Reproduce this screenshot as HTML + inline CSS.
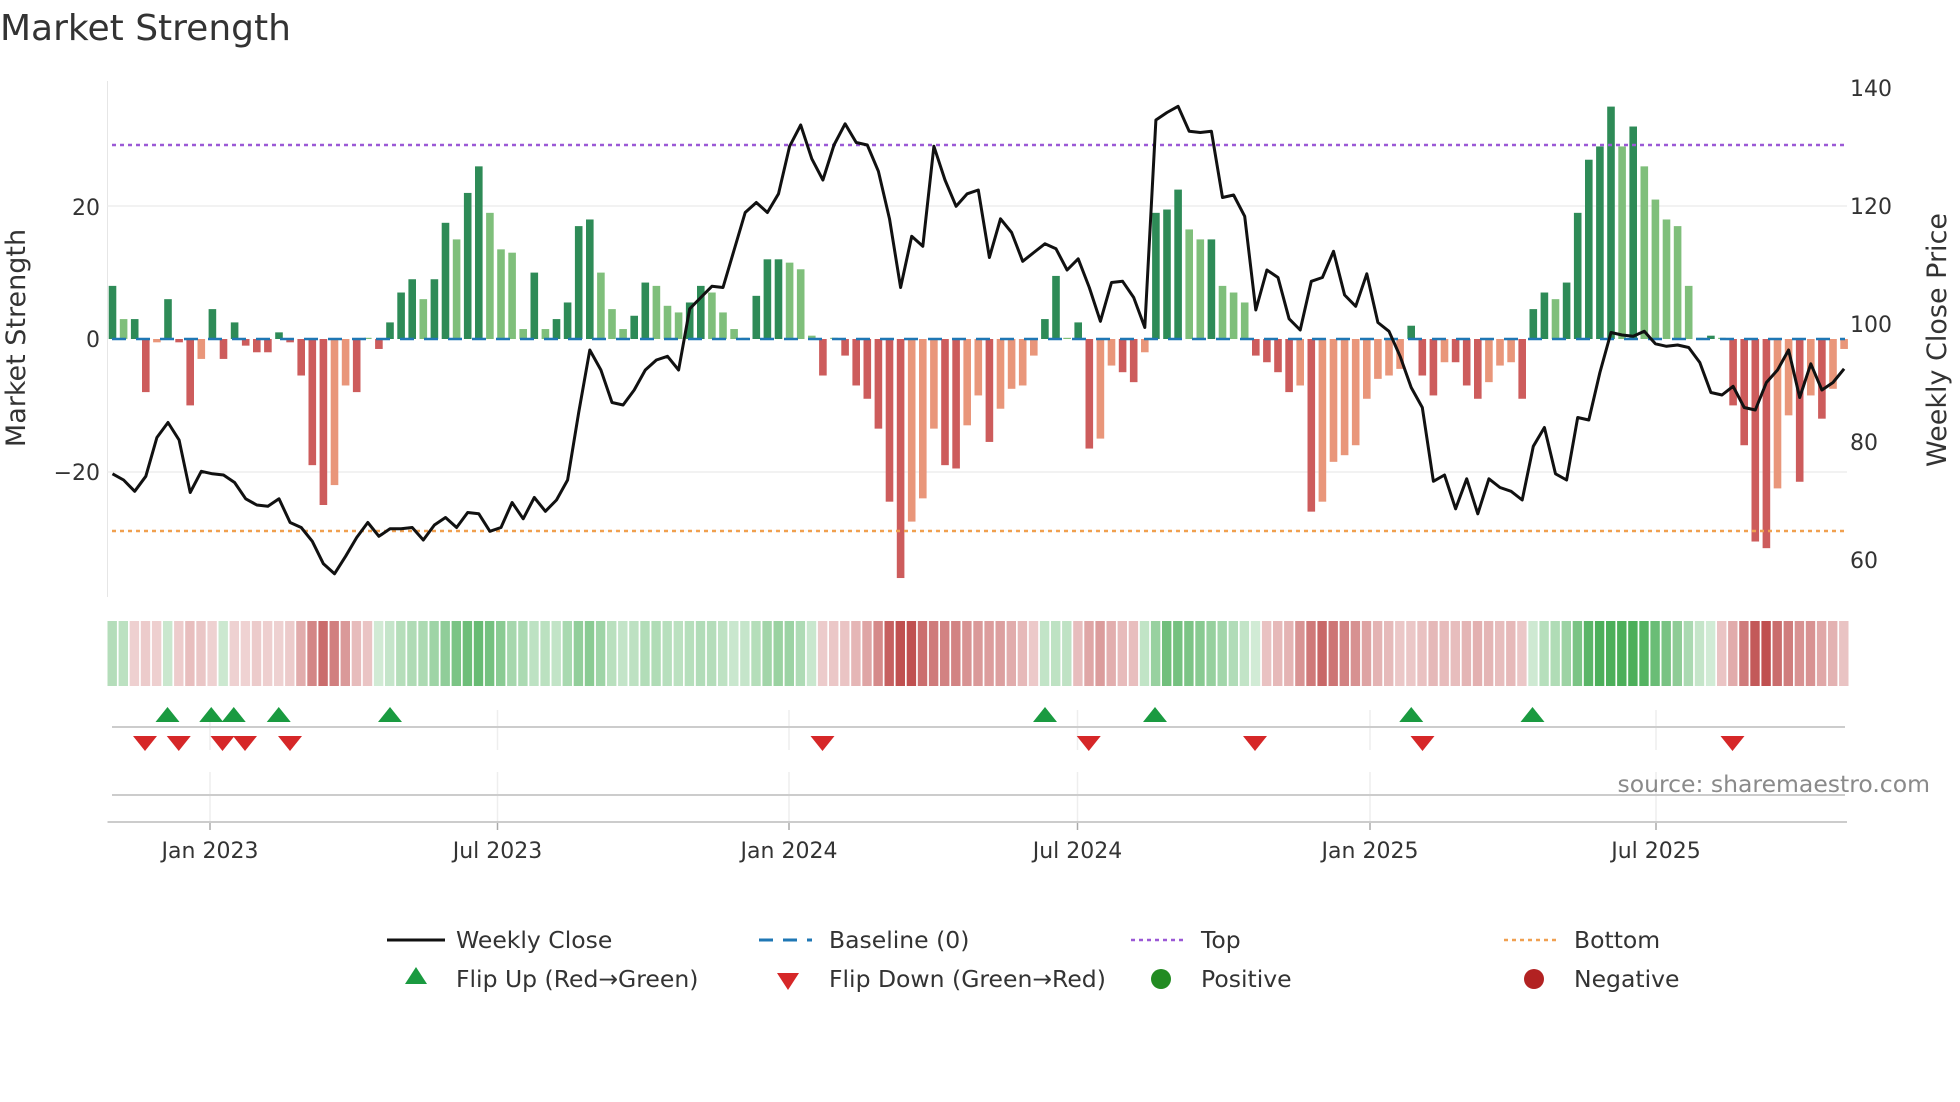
<!DOCTYPE html>
<html><head><meta charset="utf-8"><style>
html,body{margin:0;padding:0;background:#fff;width:1960px;height:1102px;overflow:hidden}
svg{display:block}
text{font-family:"DejaVu Sans","Liberation Sans",sans-serif;fill:#333}
</style></head><body>
<svg id="c" width="1960" height="1102" xmlns="http://www.w3.org/2000/svg">
<text x="0" y="40" font-size="36">Market Strength</text>
<g id="g"></g>
<text x="1930" y="792" font-size="23.5" text-anchor="end" style="fill:#8a8a8a">source: sharemaestro.com</text>
<text transform="translate(25,338) rotate(-90)" font-size="27" text-anchor="middle">Market Strength</text>
<text transform="translate(1946,340) rotate(-90)" font-size="27" text-anchor="middle">Weekly Close Price</text>
<g font-size="22">
<text x="100" y="215" text-anchor="end">20</text>
<text x="100" y="347" text-anchor="end">0</text>
<text x="100" y="480" text-anchor="end">−20</text>
<text x="1850" y="96">140</text>
<text x="1850" y="214">120</text>
<text x="1850" y="332">100</text>
<text x="1850" y="450">80</text>
<text x="1850" y="568">60</text>
<text x="210" y="858" text-anchor="middle">Jan 2023</text>
<text x="497.5" y="858" text-anchor="middle">Jul 2023</text>
<text x="789" y="858" text-anchor="middle">Jan 2024</text>
<text x="1077.5" y="858" text-anchor="middle">Jul 2024</text>
<text x="1370" y="858" text-anchor="middle">Jan 2025</text>
<text x="1656" y="858" text-anchor="middle">Jul 2025</text>
</g>
<g font-size="23.5">
<line x1="387" y1="940" x2="445" y2="940" stroke="#111" stroke-width="3"/>
<text x="456" y="948">Weekly Close</text>
<line x1="759" y1="940" x2="812" y2="940" stroke="#1f77b4" stroke-width="3" stroke-dasharray="14,10"/>
<text x="829" y="948">Baseline (0)</text>
<line x1="1131" y1="940" x2="1185" y2="940" stroke="#9b59d6" stroke-width="2.5" stroke-dasharray="4,4"/>
<text x="1201" y="948">Top</text>
<line x1="1504" y1="940" x2="1559" y2="940" stroke="#f0a050" stroke-width="2.5" stroke-dasharray="4,4"/>
<text x="1574" y="948">Bottom</text>
<polygon points="416,967 427,984 405,984" fill="#1a9a40"/>
<text x="456" y="987">Flip Up (Red→Green)</text>
<polygon points="777,973 799,973 788,990" fill="#d62728"/>
<text x="829" y="987">Flip Down (Green→Red)</text>
<circle cx="1161" cy="979" r="10" fill="#228b22"/>
<text x="1201" y="987">Positive</text>
<circle cx="1534" cy="979" r="10" fill="#b22222"/>
<text x="1574" y="987">Negative</text>
</g>
</svg>
<script>
var V=[8,3,3,-8,-0.5,6,-0.5,-10,-3,4.5,-3,2.5,-1,-2,-2,1,-0.5,-5.5,-19,-25,-22,-7,-8,0,-1.5,2.5,7,9,6,9,17.5,15,22,26,19,13.5,13,1.5,10,1.5,3,5.5,17,18,10,4.5,1.5,3.5,8.5,8,5,4,5.5,8,7,4,1.5,0,6.5,12,12,11.5,10.5,0.5,-5.5,0,-2.5,-7,-9,-13.5,-24.5,-36,-27.5,-24,-13.5,-19,-19.5,-13,-8.5,-15.5,-10.5,-7.5,-7,-2.5,3,9.5,0,2.5,-16.5,-15,-4,-5,-6.5,-2,19,19.5,22.5,16.5,15,15,8,7,5.5,-2.5,-3.5,-5,-8,-7,-26,-24.5,-18.5,-17.5,-16,-9,-6,-5.5,-4.5,2,-5.5,-8.5,-3.5,-3.5,-7,-9,-6.5,-4,-3.5,-9,4.5,7,6,8.5,19,27,29,35,29,32,26,21,18,17,8,0,0.5,0,-10,-16,-30.5,-31.5,-22.5,-11.5,-21.5,-8.5,-12,-7.5,-1.5];
var P=[379,384,393,381,350,338,352,394,377,379,380,386,399,404,405,399,418,422,433,451,459,445,430,418,429,423,423,422,432,420,414,422,410,411,425,422,402,415,398,409,400,384,330,280,296,322,324,312,296,288,285,296,247,238,229,230,200,170,162,170,155,117,100,127,144,116,99,114,116,137,175,230,189,197,117,144,165,155,152,206,175,186,209,202,195,199,216,207,230,257,226,225,238,262,96,90,85,105,106,105,158,156,173,248,216,222,255,264,225,222,201,236,245,219,258,265,285,310,326,385,380,407,383,411,383,390,393,400,357,342,379,384,334,336,298,266,268,269,265,275,277,276,278,290,314,316,309,326,328,306,296,280,318,291,312,306,295];
var s='',Z=339,U=6.64,W=11.1;
function X(i){return 112.5+i*W;}
s+='<line x1="107.5" y1="81" x2="107.5" y2="597" stroke="#e6e6e6"/>';
[206,472].forEach(function(y){s+='<line x1="107.5" y1="'+y+'" x2="1847" y2="'+y+'" stroke="#eee" stroke-width="1.5"/>';});
[210,497.5,789,1077.5,1370,1656].forEach(function(x){
 s+='<line x1="'+x+'" y1="710" x2="'+x+'" y2="750" stroke="#eee" stroke-width="1.5"/>';
 s+='<line x1="'+x+'" y1="772" x2="'+x+'" y2="822" stroke="#eee" stroke-width="1.5"/>';
 s+='<line x1="'+x+'" y1="822" x2="'+x+'" y2="830" stroke="#aaa" stroke-width="1.5"/>';
});
for(var i=0;i<V.length;i++){var v=V[i],p=i?V[i-1]:0,dark=(v>0&&p<=0)||(v<0&&p>=0)||Math.abs(v)>=Math.abs(p);
 var c=v>=0?(dark?'#2e8b57':'#7fbf7b'):(dark?'#cd5c5c':'#e9967a');
 var h=Math.abs(v)*U;if(h<1)h=1.2;var y=v>=0?Z-h:Z;
 s+='<rect x="'+(X(i)-3.8)+'" y="'+y+'" width="7.6" height="'+h+'" fill="'+c+'"/>';}
s+='<line x1="112" y1="'+Z+'" x2="1845" y2="'+Z+'" stroke="#1f77b4" stroke-width="2.5" stroke-dasharray="14,10"/>';
s+='<line x1="112" y1="145" x2="1845" y2="145" stroke="#9b59d6" stroke-width="2.5" stroke-dasharray="4,4"/>';
s+='<line x1="112" y1="531" x2="1845" y2="531" stroke="#f0a050" stroke-width="2.5" stroke-dasharray="4,4"/>';
var pts=[];for(i=0;i<P.length;i++)pts.push(X(i).toFixed(1)+','+(P[i]*1.25).toFixed(1));
s+='<polyline points="'+pts.join(' ')+'" fill="none" stroke="#111" stroke-width="3" stroke-linejoin="round"/>';
var last=1;
for(i=0;i<V.length;i++){var a=0;for(var k=-1;k<=1;k++){var j=Math.min(V.length-1,Math.max(0,i+k));a+=V[j];}a/=3;
 var sg=a>0.3?1:(a<-0.3?-1:last);last=sg;var t=Math.min(1,Math.abs(a)/28);t=0.25+0.75*t;
 var base=sg>0?[76,175,90]:[192,80,80];var col='rgb('+base.map(function(b){return Math.round(255-(255-b)*t);}).join(',')+')';
 s+='<rect x="'+(107.5+i*W)+'" y="621" width="9.4" height="65" fill="'+col+'"/>';}
s+='<line x1="112" y1="727" x2="1845" y2="727" stroke="#ccc" stroke-width="2"/>';
s+='<line x1="112" y1="795" x2="1845" y2="795" stroke="#ccc" stroke-width="2"/>';
s+='<line x1="107.5" y1="822" x2="1847" y2="822" stroke="#ccc" stroke-width="2"/>';
[134,169,187,223,312,836,924,1129,1226].forEach(function(x){x*=1.25;s+='<polygon points="'+x+',707 '+(x+12)+',722 '+(x-12)+',722" fill="#1a9a40"/>';});
[116,143,178,196,232,658,871,1004,1138,1386].forEach(function(x){x*=1.25;s+='<polygon points="'+(x-12)+',736 '+(x+12)+',736 '+x+',751" fill="#d62728"/>';});
document.getElementById('g').innerHTML=s;
</script>
</body></html>
